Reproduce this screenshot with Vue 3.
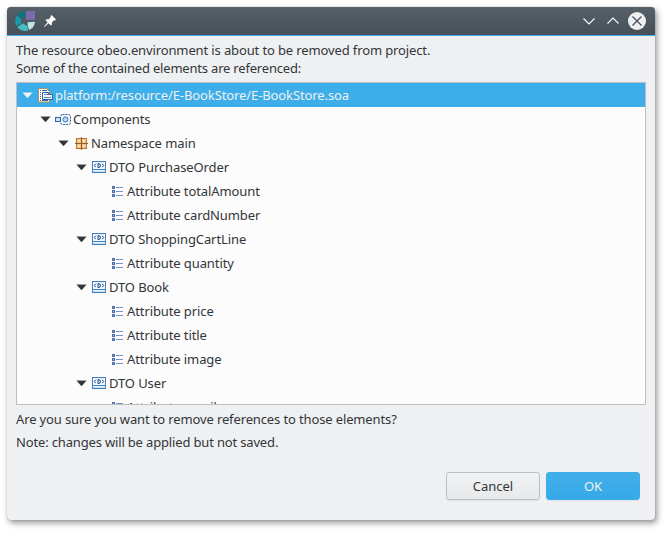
<script setup>
const rows = [
  { depth: 0, icon: 'file', label: 'platform:/resource/E-BookStore/E-BookStore.soa', selected: true },
  { depth: 1, icon: 'components', label: 'Components' },
  { depth: 2, icon: 'namespace', label: 'Namespace main' },
  { depth: 3, icon: 'dto', label: 'DTO PurchaseOrder' },
  { depth: 4, icon: 'attribute', label: 'Attribute totalAmount' },
  { depth: 4, icon: 'attribute', label: 'Attribute cardNumber' },
  { depth: 3, icon: 'dto', label: 'DTO ShoppingCartLine' },
  { depth: 4, icon: 'attribute', label: 'Attribute quantity' },
  { depth: 3, icon: 'dto', label: 'DTO Book' },
  { depth: 4, icon: 'attribute', label: 'Attribute price' },
  { depth: 4, icon: 'attribute', label: 'Attribute title' },
  { depth: 4, icon: 'attribute', label: 'Attribute image' },
  { depth: 3, icon: 'dto', label: 'DTO User' },
  { depth: 4, icon: 'attribute', label: 'Attribute email' }
]
</script>

<template>
  <div class="desktop">
    <section class="window">
      <header class="titlebar">
        <svg class="logo" width="20" height="20" viewBox="0 0 20 20">
          <path d="M11 0H20v8.800h-9z" fill="#7a6cab" />
          <path d="M9.800.2V6L6.500 7.500 2.700 3.700Q5.400.3 9.800.2z" fill="#00788a" />
          <path d="M2.200 4.400L6.200 8.300 6 12.300 1.500 15Q-1.600 9.400 2.200 4.400z" fill="#1799ab" />
          <path d="M2.300 16L8 12.300 12.800 15.600 13 19.500Q6.600 21.200 2.300 16z" fill="#45bdc4" />
          <path d="M12.500 11.200L20 10.700Q19.700 16.400 14.200 19L12.800 15z" fill="#bfe3e6" />
        </svg>
        <svg class="pin" width="12" height="12" viewBox="0 0 12 12">
          <path d="M7.400 0L12 4.500 11 5.500 9.900 5.200 7.900 7.400 7.900 9.400 6.900 10.400 4.500 8.200.600 11.900.100 11.400 3.600 7.300 1.500 5.200 2.400 4.200 4.600 4.200 6.900 2.100 6.500 1z" fill="#fcfcfc" />
        </svg>
        <div class="controls">
          <svg width="18" height="18" viewBox="0 0 18 18"><path d="M3.500 6.500L9 12l5.500-5.500" /></svg>
          <svg width="18" height="18" viewBox="0 0 18 18"><path d="M3.500 11.500L9 6l5.500 5.500" /></svg>
          <svg class="close" width="18" height="18" viewBox="0 0 18 18"><circle cx="9" cy="9" r="9" /><path d="M4.500 4.500l9 9m0-9l-9 9" /></svg>
        </div>
      </header>

      <main class="content">
        <p class="message"><span class="lead">The resource obeo.environment is about to be removed from project.</span><br><span class="detail">Some of the contained elements are referenced:</span></p>

        <div class="tree">
          <div v-for="(row, i) in rows" :key="i" class="row" :class="{ selected: row.selected }" :style="{ paddingLeft: row.depth * 18 + 5 + 'px' }">
            <svg class="arrow" width="11" height="6" viewBox="0 0 11 6"><template v-if="row.depth < 4"><path d="M.5 0h10v1h-10z" opacity=".45" /><path d="M.900 1h9.200L6 5.700H5z" /></template></svg>

            <svg v-if="row.icon === 'file'" class="icon" width="16" height="16" viewBox="0 0 16 16">
              <path d="M1.500 1.500h8l3 3v10.500h-11z" fill="#fffdf5" stroke="#ab925c" />
              <path d="M3 3.500h1m1 0h5M3 5.500h1M3 7.500h1M3 9.500h1M3 11.500h1M3 13.500h1m1 0h6M5 11.500h1" stroke="#3565a5" />
              <path d="M5.500 5.500h6v2h4v5h-10z" fill="#f2f8fe" stroke="#35609c" />
              <path d="M7 7.500h4M7 10.500h7" stroke="#5d87bd" />
            </svg>
            <svg v-else-if="row.icon === 'components'" class="icon" width="16" height="16" viewBox="0 0 16 16">
              <rect x="5.500" y="3.500" width="10" height="10" rx="2" fill="#edf6fd" stroke="#2d639c" stroke-dasharray="2 1" />
              <rect x=".5" y="6.500" width="5" height="4" fill="#cfe0f5" stroke="#2e67a8" />
              <circle cx="10.500" cy="8.500" r="2.500" fill="#bcd6f1" stroke="#4679b6" />
            </svg>
            <svg v-else-if="row.icon === 'namespace'" class="icon" width="16" height="16" viewBox="0 0 16 16">
              <rect x="3.500" y="3.500" width="10" height="10" fill="#f0c58b" stroke="#bd7430" />
              <path d="M5 5h2v2H5zM10 5h2v2h-2zM5 10h2v2H5zM10 10h2v2h-2z" fill="#fbe2b5" />
              <path d="M8.500 2v13M2 8.500h13" stroke="#995a27" />
            </svg>
            <svg v-else-if="row.icon === 'dto'" class="icon" width="16" height="16" viewBox="0 0 16 16">
              <rect x="1.500" y="2.500" width="13" height="11" fill="#f4faff" stroke="#3f7fbd" />
              <path d="M2 10.500h12" stroke="#3f7fbd" />
              <path d="M2 12.500h12" stroke="#c6dff4" />
              <path d="M4.800 4.800L3.300 6.500l1.500 1.700M11.200 4.800l1.500 1.700-1.500 1.700" fill="none" stroke="#173f83" />
              <path d="M7 4.500h.8q1.600 0 1.600 2t-1.600 2H7z" fill="none" stroke="#173f83" />
            </svg>
            <svg v-else class="icon" width="16" height="16" viewBox="0 0 16 16">
              <path d="M3 3h3v3H3zM3 7h3v3H3zM3 11h3v3H3z" fill="#4b6da8" />
              <path d="M4 4h1v1H4zM4 8h1v1H4zM4 12h1v1H4z" fill="#8ba6d4" />
              <path d="M7 4.500h7M7 8.500h7M7 12.500h7" stroke="#7893c4" />
            </svg>
            <span class="label">{{ row.label }}</span>
          </div>
        </div>

        <p class="question">Are you sure you want to remove references to those elements?</p>
        <p class="note">Note: changes will be applied but not saved.</p>

        <footer class="actions">
          <button class="button">Cancel</button>
          <button class="button primary">OK</button>
        </footer>
      </main>
    </section>
  </div>
</template>

<style>
body {
  background: #fff;
}
</style>

<style scoped>
.desktop {
  box-sizing: border-box;
  width: 668px;
  height: 533px;
  padding: 7px;
  overflow: hidden;
  font-family: "Noto Sans", sans-serif;
  font-size: 13px;
  color: #31363b;
}
.window {
  width: 648px;
  height: 513px;
  border-radius: 4px;
  background: #eff0f1;
  box-shadow: 0 0 1px rgba(0, 0, 0, .35), 2px 3px 6px rgba(0, 0, 0, .42);
}
.titlebar {
  box-sizing: border-box;
  display: flex;
  align-items: center;
  height: 29px;
  padding: 0 9px 0 8px;
  border-bottom: 1px solid #3daee9;
  border-radius: 4px 4px 0 0;
  background: linear-gradient(#566068, #475057);
}
.pin {
  margin-left: 9px;
}
.controls {
  display: flex;
  gap: 6px;
  margin-left: auto;
}
.controls path {
  fill: none;
  stroke: #fcfcfc;
  stroke-width: 1.1;
}
.controls .close circle {
  fill: #eff0f1;
}
.controls .close path {
  stroke: #475057;
  stroke-width: 1.3;
}
.content {
  padding: 5px 9px 0;
}
p {
  margin: 0;
  line-height: 18px;
  white-space: nowrap;
}
.lead {
  letter-spacing: -.125px;
}
.detail {
  letter-spacing: -.195px;
}
.tree {
  box-sizing: border-box;
  width: 630px;
  height: 323px;
  margin-top: 5px;
  overflow: hidden;
  border: 1px solid #bcbebf;
  background: #fcfcfc;
}
.row {
  display: flex;
  align-items: center;
  box-sizing: border-box;
  height: 24px;
  line-height: 24px;
  white-space: nowrap;
  letter-spacing: -.1px;
}
.row.selected {
  background: #3daee9;
  color: #eff0f1;
}
.arrow {
  flex: none;
  fill: #31363b;
}
.selected .arrow {
  fill: #eff0f1;
}
.icon {
  flex: none;
  margin: 0 2px 0 4px;
}
.question {
  margin-top: 5px;
  letter-spacing: -.13px;
}
.note {
  margin-top: 5px;
  letter-spacing: -.16px;
}
.actions {
  display: flex;
  justify-content: flex-end;
  gap: 6px;
  margin-top: 21px;
  padding-right: 6px;
}
.button {
  box-sizing: border-box;
  width: 94px;
  height: 28px;
  padding: 0;
  border: 1px solid #bcbebf;
  border-radius: 3px;
  background: linear-gradient(#f1f2f3, #e8e9ea);
  box-shadow: 0 1px 1px rgba(0, 0, 0, .06);
  font: inherit;
  color: #31363b;
}
.button.primary {
  border-color: #3daee9;
  background: linear-gradient(#41afea, #37a9e8);
  color: #eff0f1;
}
</style>
